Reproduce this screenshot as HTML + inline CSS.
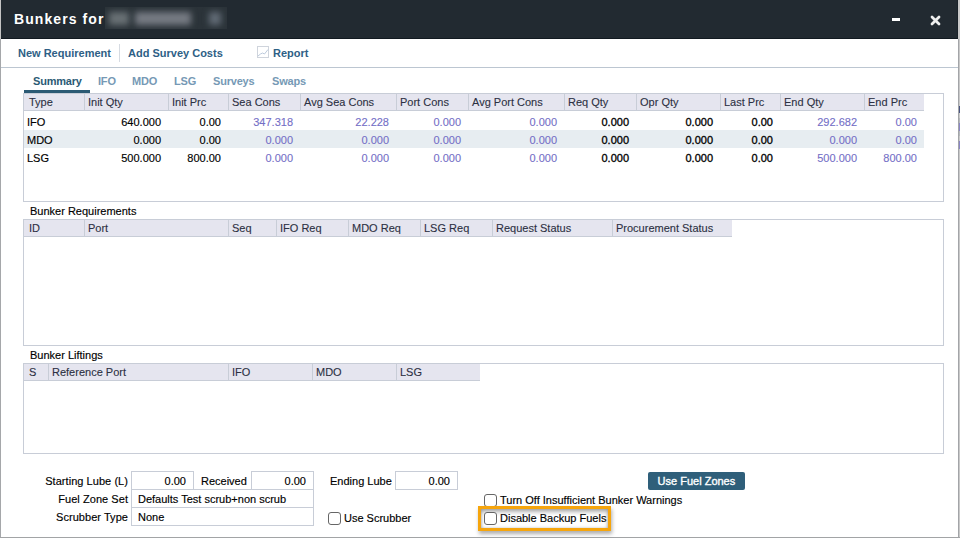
<!DOCTYPE html>
<html><head><meta charset="utf-8">
<style>
*{box-sizing:border-box;margin:0;padding:0}
html,body{width:960px;height:538px;overflow:hidden;background:#d4d4d4}
body{position:relative;font-family:"Liberation Sans",sans-serif;font-size:11px;color:#222}
.a{position:absolute;white-space:nowrap}
#win{position:absolute;left:1px;top:0;width:957px;height:537px;background:#fff}
#title{position:absolute;left:1px;top:0;width:957px;height:39px;background:#222a31;border-bottom:1px solid #121a21;border-right:1px solid #1a2229}
.t{position:absolute;white-space:nowrap;line-height:13px;height:13px}
.r{text-align:right}
.link{font-weight:bold;color:#2e6085}
.tab{font-weight:bold;color:#7699b5}
.box{position:absolute;border:1px solid #c8cdd7;background:#fff}
.hdr{position:absolute;background:#e5e5ef;border-bottom:1px solid #c8cdd7}
.sep{position:absolute;width:1px;background:#c8cdd7}
.hd{position:absolute;white-space:nowrap;line-height:13px;color:#2c3042;-webkit-text-stroke:0.1px #2c3042}
.p{color:#736ec6;-webkit-text-stroke:0.1px #736ec6}
.k{color:#000;-webkit-text-stroke:0.15px #000}
.b{color:#000;-webkit-text-stroke:0.3px #000}
.cb{position:absolute;width:13px;height:13px;border:1px solid #666;border-radius:3px;background:#fff}
</style></head><body>
<div id="win"></div>
<div class="a" style="left:0;top:0;width:1px;height:538px;background:#a5a7aa"></div><div class="a" style="left:0;top:0;width:1px;height:39px;background:#c4c4c4"></div>
<div class="a" style="left:958px;top:0;width:2px;height:538px;background:#c9c9c9"></div>
<div class="a" style="left:958px;top:39px;width:1px;height:499px;background:#a3a5a8"></div>
<div class="a" style="left:0;top:537px;width:960px;height:1px;background:#a2a4a6"></div>

<div class="a" style="left:959px;top:106px;width:1px;height:7px;background:#4a5580"></div>
<div class="a" style="left:959px;top:118px;width:1px;height:18px;background:#b4b7bb"></div>
<div class="a" style="left:959px;top:123px;width:1px;height:8px;background:#8a85c6"></div>
<div class="a" style="left:959px;top:141px;width:1px;height:8px;background:#8a85c6"></div>
<div id="title"></div>
<div class="t" style="left:14px;top:12px;font-size:14px;line-height:14px;height:14px;font-weight:bold;color:#fff;letter-spacing:1.08px">Bunkers for</div>
<div class="a" style="left:105px;top:7px;width:122px;height:22px;background:#2b3339;overflow:hidden">
<div class="a" style="left:4px;top:5px;width:20px;height:13px;background:#687074;filter:blur(3px)"></div>
<div class="a" style="left:30px;top:5px;width:56px;height:13px;background:#757a82;filter:blur(3px)"></div>
<div class="a" style="left:104px;top:5px;width:12px;height:13px;background:#606a74;filter:blur(3px)"></div>
</div>
<div class="a" style="left:892px;top:18px;width:8px;height:3px;background:#fff"></div>
<svg class="a" style="left:929px;top:14px" width="13" height="13" viewBox="0 0 13 13"><path d="M3 3L10 10M10 3L3 10" stroke="#eee" stroke-width="2.8" stroke-linecap="round"/></svg>

<!-- toolbar -->
<div class="t link" style="left:18px;top:47px">New Requirement</div>
<div class="a" style="left:119px;top:44px;width:1px;height:18px;background:#d6dbe2"></div>
<div class="t link" style="left:128px;top:47px">Add Survey Costs</div>
<svg class="a" style="left:256px;top:46px" width="13" height="12" viewBox="0 0 13 12"><rect x="1.5" y="0.5" width="11" height="11" fill="#fff" stroke="#cfd4dc"/><path d="M2 10L4.5 8L6.5 7L8.5 8L12 3.5" fill="none" stroke="#bccadc" stroke-width="1"/></svg>
<div class="t link" style="left:273px;top:47px">Report</div>
<div class="a" style="left:1px;top:67px;width:957px;height:1px;background:#bcc6d1"></div>

<!-- tabs -->
<div class="t" style="left:33px;top:75px;letter-spacing:-0.2px;font-weight:bold;color:#2b5a74">Summary</div>
<div class="a" style="left:24px;top:90px;width:66px;height:3px;background:#2b5a74"></div>
<div class="t tab" style="left:98px;top:75px;letter-spacing:-0.2px">IFO</div>
<div class="t tab" style="left:132px;top:75px;letter-spacing:-0.2px">MDO</div>
<div class="t tab" style="left:174px;top:75px;letter-spacing:-0.2px">LSG</div>
<div class="t tab" style="left:213px;top:75px;letter-spacing:-0.2px">Surveys</div>
<div class="t tab" style="left:272px;top:75px;letter-spacing:-0.2px">Swaps</div>

<!-- summary table -->
<div class="box" style="left:23px;top:93px;width:921px;height:109px"></div>
<div class="hdr" style="left:24px;top:94px;width:900px;height:17px"></div>
<div class="a" style="left:24px;top:130px;width:900px;height:18px;background:#e7edf1"></div>
<div class="sep" style="left:84px;top:94px;height:16px"></div>
<div class="sep" style="left:168px;top:94px;height:16px"></div>
<div class="sep" style="left:228px;top:94px;height:16px"></div>
<div class="sep" style="left:300px;top:94px;height:16px"></div>
<div class="sep" style="left:396px;top:94px;height:16px"></div>
<div class="sep" style="left:468px;top:94px;height:16px"></div>
<div class="sep" style="left:564px;top:94px;height:16px"></div>
<div class="sep" style="left:636px;top:94px;height:16px"></div>
<div class="sep" style="left:720px;top:94px;height:16px"></div>
<div class="sep" style="left:780px;top:94px;height:16px"></div>
<div class="sep" style="left:864px;top:94px;height:16px"></div>
<div class="hd" style="left:29px;top:96px">Type</div>
<div class="hd" style="left:88px;top:96px">Init Qty</div>
<div class="hd" style="left:172px;top:96px">Init Prc</div>
<div class="hd" style="left:232px;top:96px">Sea Cons</div>
<div class="hd" style="left:304px;top:96px">Avg Sea Cons</div>
<div class="hd" style="left:400px;top:96px">Port Cons</div>
<div class="hd" style="left:472px;top:96px">Avg Port Cons</div>
<div class="hd" style="left:568px;top:96px">Req Qty</div>
<div class="hd" style="left:640px;top:96px">Opr Qty</div>
<div class="hd" style="left:724px;top:96px">Last Prc</div>
<div class="hd" style="left:784px;top:96px">End Qty</div>
<div class="hd" style="left:868px;top:96px">End Prc</div>
<div class="t k" style="left:27px;top:116px">IFO</div>
<div class="t r k" style="left:84px;width:77px;top:116px">640.000</div>
<div class="t r k" style="left:168px;width:53px;top:116px">0.00</div>
<div class="t r p" style="left:228px;width:65px;top:116px">347.318</div>
<div class="t r p" style="left:300px;width:89px;top:116px">22.228</div>
<div class="t r p" style="left:396px;width:65px;top:116px">0.000</div>
<div class="t r p" style="left:468px;width:89px;top:116px">0.000</div>
<div class="t r b" style="left:564px;width:65px;top:116px">0.000</div>
<div class="t r b" style="left:636px;width:77px;top:116px">0.000</div>
<div class="t r b" style="left:720px;width:53px;top:116px">0.00</div>
<div class="t r p" style="left:780px;width:77px;top:116px">292.682</div>
<div class="t r p" style="left:864px;width:53px;top:116px">0.00</div>
<div class="t k" style="left:27px;top:134px">MDO</div>
<div class="t r k" style="left:84px;width:77px;top:134px">0.000</div>
<div class="t r k" style="left:168px;width:53px;top:134px">0.00</div>
<div class="t r p" style="left:228px;width:65px;top:134px">0.000</div>
<div class="t r p" style="left:300px;width:89px;top:134px">0.000</div>
<div class="t r p" style="left:396px;width:65px;top:134px">0.000</div>
<div class="t r p" style="left:468px;width:89px;top:134px">0.000</div>
<div class="t r b" style="left:564px;width:65px;top:134px">0.000</div>
<div class="t r b" style="left:636px;width:77px;top:134px">0.000</div>
<div class="t r b" style="left:720px;width:53px;top:134px">0.00</div>
<div class="t r p" style="left:780px;width:77px;top:134px">0.000</div>
<div class="t r p" style="left:864px;width:53px;top:134px">0.00</div>
<div class="t k" style="left:27px;top:152px">LSG</div>
<div class="t r k" style="left:84px;width:77px;top:152px">500.000</div>
<div class="t r k" style="left:168px;width:53px;top:152px">800.00</div>
<div class="t r p" style="left:228px;width:65px;top:152px">0.000</div>
<div class="t r p" style="left:300px;width:89px;top:152px">0.000</div>
<div class="t r p" style="left:396px;width:65px;top:152px">0.000</div>
<div class="t r p" style="left:468px;width:89px;top:152px">0.000</div>
<div class="t r b" style="left:564px;width:65px;top:152px">0.000</div>
<div class="t r b" style="left:636px;width:77px;top:152px">0.000</div>
<div class="t r b" style="left:720px;width:53px;top:152px">0.00</div>
<div class="t r p" style="left:780px;width:77px;top:152px">500.000</div>
<div class="t r p" style="left:864px;width:53px;top:152px">800.00</div>

<!-- bunker requirements -->
<div class="t k" style="left:30px;top:205px">Bunker Requirements</div>
<div class="box" style="left:23px;top:219px;width:921px;height:127px"></div>
<div class="hdr" style="left:24px;top:220px;width:708px;height:17px"></div>
<div class="sep" style="left:84px;top:220px;height:16px"></div>
<div class="sep" style="left:228px;top:220px;height:16px"></div>
<div class="sep" style="left:276px;top:220px;height:16px"></div>
<div class="sep" style="left:348px;top:220px;height:16px"></div>
<div class="sep" style="left:420px;top:220px;height:16px"></div>
<div class="sep" style="left:492px;top:220px;height:16px"></div>
<div class="sep" style="left:612px;top:220px;height:16px"></div>
<div class="hd" style="left:29px;top:222px">ID</div>
<div class="hd" style="left:88px;top:222px">Port</div>
<div class="hd" style="left:232px;top:222px">Seq</div>
<div class="hd" style="left:280px;top:222px">IFO Req</div>
<div class="hd" style="left:352px;top:222px">MDO Req</div>
<div class="hd" style="left:424px;top:222px">LSG Req</div>
<div class="hd" style="left:496px;top:222px">Request Status</div>
<div class="hd" style="left:616px;top:222px">Procurement Status</div>

<!-- bunker liftings -->
<div class="t k" style="left:30px;top:349px">Bunker Liftings</div>
<div class="box" style="left:23px;top:363px;width:921px;height:91px"></div>
<div class="hdr" style="left:24px;top:364px;width:456px;height:17px"></div>
<div class="sep" style="left:48px;top:364px;height:16px"></div>
<div class="sep" style="left:228px;top:364px;height:16px"></div>
<div class="sep" style="left:312px;top:364px;height:16px"></div>
<div class="sep" style="left:396px;top:364px;height:16px"></div>
<div class="hd" style="left:29px;top:366px">S</div>
<div class="hd" style="left:52px;top:366px">Reference Port</div>
<div class="hd" style="left:232px;top:366px">IFO</div>
<div class="hd" style="left:316px;top:366px">MDO</div>
<div class="hd" style="left:400px;top:366px">LSG</div>

<!-- bottom form -->
<div class="t r k" style="left:0;width:128px;top:475px;letter-spacing:0.05px">Starting Lube (L)</div>
<div class="box" style="left:131px;top:471px;width:63px;height:19px"></div>
<div class="t r k" style="left:131px;width:55px;top:475px">0.00</div>
<div class="t k" style="left:201px;top:475px">Received</div>
<div class="box" style="left:251px;top:471px;width:63px;height:19px"></div>
<div class="t r k" style="left:251px;width:55px;top:475px">0.00</div>
<div class="t r k" style="left:0;width:128px;top:493px;letter-spacing:0.05px">Fuel Zone Set</div>
<div class="box" style="left:131px;top:489px;width:183px;height:19px"></div>
<div class="t k" style="left:138px;top:493px">Defaults Test scrub+non scrub</div>
<div class="t r k" style="left:0;width:128px;top:511px;letter-spacing:0.05px">Scrubber Type</div>
<div class="box" style="left:131px;top:507px;width:183px;height:19px"></div>
<div class="t k" style="left:138px;top:511px">None</div>

<div class="t k" style="left:330px;top:475px">Ending Lube</div>
<div class="box" style="left:395px;top:471px;width:63px;height:19px"></div>
<div class="t r k" style="left:395px;width:55px;top:475px">0.00</div>

<div class="cb" style="left:328px;top:512px"></div>
<div class="t k" style="left:344px;top:512px">Use Scrubber</div>

<div class="a" style="left:648px;top:472px;width:97px;height:18px;background:#2f5f7a;border-radius:2px"></div>
<div class="t" style="left:657.6px;top:475px;color:#fff;-webkit-text-stroke:0.35px #fff">Use Fuel Zones</div>

<div class="cb" style="left:484px;top:494px"></div>
<div class="t k" style="left:500px;top:494px">Turn Off Insufficient Bunker Warnings</div>

<div class="a" style="left:478px;top:506px;width:133px;height:25px;border:3px solid #f6a50c;box-shadow:1px 3px 4px rgba(0,0,0,.32), inset 0 3px 4px rgba(0,0,0,.3), inset 0 0 3px rgba(0,0,0,.22);background:#fff"></div>
<div class="cb" style="left:484px;top:512px"></div>
<div class="t k" style="left:500px;top:512px">Disable Backup Fuels</div>
</body></html>
